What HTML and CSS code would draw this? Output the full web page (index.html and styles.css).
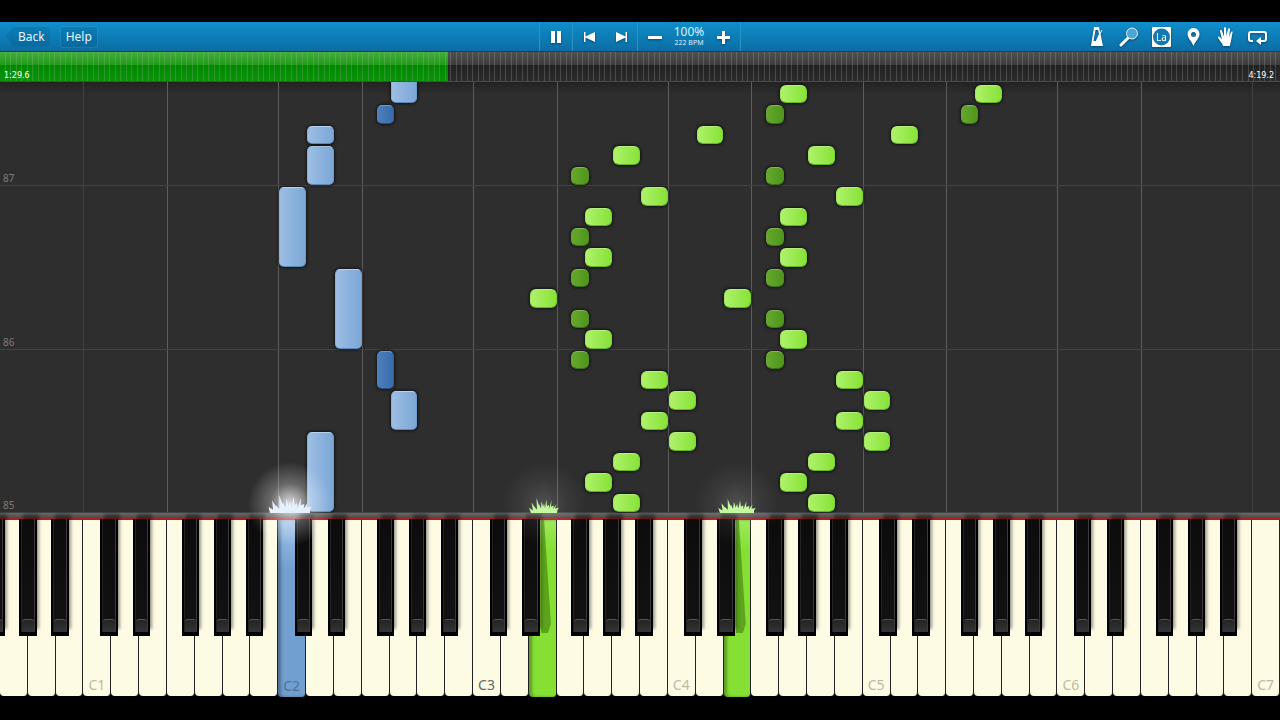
FILE: index.html
```
<!DOCTYPE html>
<html lang="en">
<head>
    <meta charset="UTF-8">
    <meta name="viewport" content="width=device-width, initial-scale=1.0">
    <title>Piano Roll</title>
    <link rel="stylesheet" href="styles.css">
</head>
<body>
    <header class="toolbar">
        <nav class="toolbar-left">
            <button class="nav-btn back-btn">Back</button>
            <button class="nav-btn">Help</button>
        </nav>
        <div class="transport">
            <div class="group group-pause">
                <button class="icon-btn" aria-label="Pause">
                    <svg width="20" height="20" viewBox="0 0 20 20"><path d="M5 4h4v12H5zM11 4h4v12h-4z"/></svg>
                </button>
            </div>
            <div class="group group-skip">
                <button class="icon-btn" aria-label="Previous">
                    <svg width="20" height="20" viewBox="0 0 20 20"><path d="M4 5h1.500v4.500L15 5v10l-9.500-4.500V15H4z"/></svg>
                </button>
                <button class="icon-btn" aria-label="Next">
                    <svg width="20" height="20" viewBox="0 0 20 20"><path d="M15 5h-1.500v4.500L4 5v10l9.500-4.500V15H15z"/></svg>
                </button>
            </div>
            <div class="group group-speed">
                <button class="icon-btn" aria-label="Slower">
                    <svg width="20" height="20" viewBox="0 0 20 20"><path d="M3 9h14v3H3z"/></svg>
                </button>
                <div class="speed">
                    <span class="speed-value">100%</span>
                    <span class="speed-bpm">222 BPM</span>
                </div>
                <button class="icon-btn" aria-label="Faster">
                    <svg width="20" height="20" viewBox="0 0 20 20"><path d="M4 9h5V4h3v5h5v3h-5v5H9v-5H4z"/></svg>
                </button>
            </div>
        </div>
        <div class="toolbar-right">
            <button class="icon-btn" aria-label="Metronome">
                <svg width="22" height="22" viewBox="0 0 22 22">
                    <path fill-rule="evenodd" d="M8 1h5l4 19H5zM9.500 4L7.500 15H10l3-7-1-4z"/>
                    <path class="line arm" d="M10 16l6-12"/>
                </svg>
            </button>
            <button class="icon-btn" aria-label="Zoom">
                <svg width="22" height="22" viewBox="0 0 22 22">
                    <path class="line handle" d="M3 19l7-7"/>
                    <circle class="lens" cx="14" cy="7.500" r="5.500"/>
                </svg>
            </button>
            <button class="icon-btn" aria-label="Note names">
                <svg width="22" height="22" viewBox="0 0 22 22">
                    <rect x="2" y="1" width="19" height="20" rx="1"/>
                    <circle class="badge" cx="11.500" cy="11" r="8.500"/>
                    <text class="badge-text" x="11.500" y="15" text-anchor="middle">La</text>
                </svg>
            </button>
            <button class="icon-btn" aria-label="Bookmark">
                <svg width="22" height="22" viewBox="0 0 22 22">
                    <path fill-rule="evenodd" d="M11.500 2a6 6 0 0 1 6 6c0 4-4 7-6 12-2-5-6-8-6-12a6 6 0 0 1 6-6zm0 4a2.500 2.500 0 1 0 0 5 2.500 2.500 0 0 0 0-5z"/>
                </svg>
            </button>
            <button class="icon-btn" aria-label="Hands">
                <svg width="22" height="22" viewBox="0 0 22 22">
                    <path d="M9 20c0-3-4-5-5-9 1-1 2 0 4 2.500L6 5c0-1 1.500-1.500 2 0l2 5.500V2c0-1 2-1 2 0l.6 8L14 3c.3-1 2-1 2 .5L15 11l2-5c.5-1 2-.5 1.500.5L17 15c-.3 2-1 3-1 5z"/>
                </svg>
            </button>
            <button class="icon-btn" aria-label="Loop">
                <svg width="22" height="22" viewBox="0 0 22 22">
                    <path class="line" d="M7 15H5a2 2 0 0 1-2-2V8a2 2 0 0 1 2-2h13a2 2 0 0 1 2 2v5a2 2 0 0 1-2 2h-4"/>
                    <path d="M10 15l5-4v8z"/>
                </svg>
            </button>
        </div>
    </header>

    <div class="timeline">
        <div class="timeline-played"></div>
        <div class="timeline-bars"></div>
        <span class="time time-now">1:29.6</span>
        <span class="time time-total">4:19.2</span>
    </div>

    <main class="roll" id="roll"></main>

    <div class="rail"></div>
    <div class="keyboard" id="keyboard"></div>

    <script src="piano.js"></script>
</body>
</html>
```
FILE: styles.css
```
* {
    box-sizing: border-box;
}
body {
    margin: 0;
    padding: 22px 0 23px;
    height: 100vh;
    display: flex;
    flex-direction: column;
    background: #000;
    font-family: 'Noto Sans', 'Open Sans', sans-serif;
    overflow: hidden;
}
button {
    border: none;
    background: none;
    padding: 0;
    color: #fff;
    font-family: inherit;
    cursor: pointer;
}

/* toolbar */
.toolbar {
    flex: none;
    height: 30px;
    display: grid;
    grid-template-columns: 1fr auto 1fr;
    align-items: center;
    background: linear-gradient(#108ecb, #0b6da3);
    border-bottom: 1px solid #07405f;
}
.toolbar-left {
    display: flex;
    gap: 11px;
    padding-left: 6px;
}
.nav-btn {
    height: 20px;
    padding: 0 5px;
    font-size: 12px;
    line-height: 20px;
    color: #e4f4fc;
    background: rgba(0, 60, 100, 0.16);
    box-shadow: 0 0 0 1px rgba(120, 200, 240, 0.12);
    border-radius: 2px;
}
.back-btn {
    padding-left: 12px;
    clip-path: polygon(8px 0, 100% 0, 100% 100%, 8px 100%, 0 50%);
}
.transport {
    display: flex;
    height: 29px;
}
.group {
    display: flex;
    align-items: center;
    padding: 0 6px;
    border-left: 1px solid #2a94c8;
}
.group-skip {
    gap: 12px;
    padding: 0 5px 0 7px;
}
.group-speed {
    gap: 4px;
    padding: 0 7px;
    border-right: 1px solid #2a94c8;
}
.icon-btn {
    display: flex;
    filter: drop-shadow(0 1px 1px rgba(0, 40, 70, 0.6));
}
.icon-btn svg {
    fill: #fff;
}
.speed {
    display: flex;
    flex-direction: column;
    align-items: center;
    width: 40px;
    color: #d8f1fc;
    white-space: nowrap;
}
.speed-value {
    font-size: 12px;
    line-height: 13px;
}
.speed-bpm {
    font-size: 7px;
    line-height: 10px;
}
.toolbar-right {
    display: flex;
    justify-content: flex-end;
    gap: 10px;
    padding-right: 12px;
}
.toolbar-right .line {
    fill: none;
    stroke: #fff;
    stroke-width: 2;
}
.toolbar-right .arm {
    stroke-width: 1;
}
.toolbar-right .handle {
    stroke-width: 3;
    stroke-linecap: round;
}
.toolbar-right .lens {
    fill: #4ba6d2;
    stroke: #e8f6fd;
    stroke-width: 1;
}
.toolbar-right .badge {
    fill: #1579af;
}
.badge-text {
    font-size: 10px;
}

/* song position */
.timeline {
    flex: none;
    position: relative;
    height: 30px;
    background: linear-gradient(#505050, #3c3c3c 45%, #222 46%, #2b2b2b);
    border-bottom: 1px solid #4a4a4a;
}
.timeline-played {
    width: 35%;
    height: 100%;
    background: linear-gradient(#43ad3c, #209b1c 44%, #008a00 46%, #0c920b);
}
.timeline-bars {
    position: absolute;
    inset: 0;
    background: repeating-linear-gradient(90deg, transparent 0 5px, rgba(170, 180, 170, 0.25) 5px 6px, transparent 6px 10px, rgba(170, 180, 170, 0.25) 10px 11px);
}
.time {
    position: absolute;
    bottom: 0;
    font-family: 'DejaVu Sans', sans-serif;
    font-size: 8px;
    line-height: 11px;
    color: #fff;
}
.time-now {
    left: 4px;
}
.time-total {
    right: 6px;
}

/* falling notes */
.roll {
    flex: 1;
    position: relative;
    overflow: hidden;
    background: linear-gradient(#222, #2e2e2e 12px);
}
.column-line {
    position: absolute;
    top: 0;
    bottom: 0;
    width: 1px;
    background: #5c5c5c;
}
.column-line.edge {
    background: #414141;
}
.measure {
    position: absolute;
    left: 0;
    right: 0;
    padding-left: 3px;
    border-bottom: 1px solid #434343;
    font-size: 10px;
    line-height: 13px;
    color: #7c7c7c;
}
.note {
    position: absolute;
    border: 1px solid;
    border-radius: 6px;
    box-shadow: 0 0 3px 1px rgba(0, 0, 0, 0.6);
}
.note.right {
    background: linear-gradient(90deg, #b0f26c, #86e236) border-box;
    border-color: #b4ef80 #7ed534 #66b52a #a3e663;
}
.note.right.sharp {
    background: linear-gradient(90deg, #66a82e, #4e951b) border-box;
    border-color: #86b858 #55921f #3d7515 #6ca53b;
}
.note.left {
    background: linear-gradient(90deg, #9dbfe4, #7ba6d6) border-box;
    border-color: #b5d2ef #6d9ccf #5c89ba #8bb0d9;
    border-radius: 5px;
}
.note.left.sharp {
    background: linear-gradient(90deg, #4e80be, #386ba9) border-box;
    border-color: #7099ca #34639c #294f7e #5580b4;
}

/* keyboard */
.rail {
    flex: none;
    height: 7px;
    background: linear-gradient(#686868, #4c4848 5px, #a82020 5px);
}
.keyboard {
    flex: none;
    position: relative;
    display: flex;
    height: 177px;
    background: #000;
}
.white-key {
    flex: 1;
    min-width: 0;
    display: flex;
    align-items: flex-end;
    justify-content: center;
    height: 176px;
    padding-bottom: 2px;
    background: #fefbe5;
    border-right: 1px solid #222;
    border-radius: 0 0 4px 4px;
    font-size: 14px;
    line-height: 18px;
    color: #bcb9a6;
}
.white-key.middle {
    color: #69675e;
}
.white-key.down {
    height: 177px;
    box-shadow: inset 3px 0 3px rgba(0, 0, 0, 0.3);
}
.white-key.down.left {
    background: linear-gradient(#9ec2e8, #719fd0 50px);
    color: #4f7298;
}
.white-key.down.right {
    background: linear-gradient(#98e850, #86e034 30px);
}
.black-key {
    position: absolute;
    top: -1px;
    height: 117px;
    background: linear-gradient(#0c0c0c, #121212);
    border: solid #000;
    border-width: 0 2px 4px;
    box-shadow: 3px -6px 3px -1px rgba(0, 0, 0, 0.4), inset -1px 0 #3a3a3a, inset 1px 0 #222;
}
.black-key::after {
    content: '';
    position: absolute;
    left: 1px;
    right: 1px;
    bottom: 0;
    height: 12px;
    background: linear-gradient(#242424, #343434);
    border-top: 1px solid #555;
    border-radius: 3px 3px 0 0;
}
.key-shadow {
    position: absolute;
    top: 0;
    height: 113px;
    background: rgba(40, 90, 0, 0.45);
    clip-path: polygon(0 0, 30% 0, 100% 92%, 70% 100%, 0 100%);
}

/* sparks over the keys being played */
.glow {
    position: absolute;
    width: 90px;
    height: 90px;
    margin-left: -45px;
    top: -61px;
    background: radial-gradient(rgba(255, 255, 255, 0.85), rgba(255, 255, 255, 0.28) 32%, transparent 66%);
    pointer-events: none;
}
.glow.right {
    background: radial-gradient(rgba(255, 255, 255, 0.16), rgba(255, 255, 255, 0.06) 35%, transparent 66%);
}
.sparks {
    position: absolute;
    top: -25px;
    pointer-events: none;
}
```
FILE: piano.js
```
const WHITE_KEYS = 46;
const FIRST_C = 3;      // white keys before C1
const VISIBLE = 21.1;   // eighths shown in the roll
const BLACK_WIDTH = 0.63;

// centre of each black key, in white keys from its C
const SHARPS = { cs: 0.91, ds: 2.09, fs: 3.85, gs: 5, as: 6.15 };

// [white key, start, length] or ['fs', octave, start, length]
const leftHand = [
    [11, 0, 4], [14, 4, 2], ['fs', 2, 6, 2], [12, 8, 4], [10, 12, 4],
    [11, 16, 2], [11, 18, 1], ['fs', 2, 19, 1], [14, 20, 2]
];
const rightHand = [
    [22, 0, 1], [21, 1, 1], [22, 2, 1], [24, 3, 1], [23, 4, 1], [24, 5, 1], [23, 6, 1],
    ['fs', 3, 7, 1], [21, 8, 1], ['fs', 3, 9, 1], [19, 10, 1], ['fs', 3, 11, 1], [21, 12, 1],
    ['fs', 3, 13, 1], [21, 14, 1], [23, 15, 1], ['fs', 3, 16, 1], [22, 17, 1], [25, 18, 1],
    ['fs', 4, 19, 1], [28, 20, 1]
];

const roll = document.getElementById('roll');
const keyboard = document.getElementById('keyboard');

const percent = (keys) => (keys / WHITE_KEYS) * 100 + '%';

function add(parent, className, style) {
    const el = document.createElement('div');
    el.className = className;
    Object.assign(el.style, style);
    parent.appendChild(el);
    return el;
}

function addNote(note, hand, octaveShift) {
    const sharp = typeof note[0] === 'string';
    const [start, length] = note.slice(-2);
    let left = note[0] + octaveShift * 7;
    let width = 1;
    if (sharp) {
        width = BLACK_WIDTH;
        left = FIRST_C + (note[1] - 1 + octaveShift) * 7 + SHARPS[note[0]] - width / 2;
    }
    add(roll, 'note ' + hand + (sharp ? ' sharp' : ''), {
        left: `calc(${percent(left)} + ${sharp ? 0 : 1}px)`,
        width: `calc(${percent(width)} - ${sharp ? 0 : 1}px)`,
        bottom: `calc(${(start / VISIBLE) * 100}% + 1px)`,
        height: `calc(${(length / VISIBLE) * 100}% - 2px)`
    });
}

// grid: a line at every C and F, one at every measure
for (let k = FIRST_C; k < WHITE_KEYS; k += 7) {
    add(roll, 'column-line' + (k === FIRST_C || k === 45 ? ' edge' : ''), { left: percent(k) });
    if (k + 3 < WHITE_KEYS) {
        add(roll, 'column-line', { left: percent(k + 3) });
    }
}
for (let m = 0; m < 3; m++) {
    add(roll, 'measure', { bottom: (m * 8 / VISIBLE) * 100 + '%' }).textContent = 85 + m;
}

leftHand.forEach((n) => addNote(n, 'left', 0));
rightHand.forEach((n) => {
    addNote(n, 'right', 0);
    addNote(n, 'right', 1);
});

// white keys
const pressed = { 10: 'left', 19: 'right', 26: 'right' };
for (let k = 0; k < WHITE_KEYS; k++) {
    const key = add(keyboard, 'white-key' + (pressed[k] ? ' down ' + pressed[k] : ''), {});
    if ((k - FIRST_C) % 7 === 0) {
        const octave = (k - FIRST_C) / 7 + 1;
        key.textContent = 'C' + octave;
        if (octave === 3) key.classList.add('middle');
    }
}

// black keys
for (let octave = 0; octave < 7; octave++) {
    for (const name in SHARPS) {
        const centre = FIRST_C + (octave - 1) * 7 + SHARPS[name];
        if (centre < -0.5 || centre > WHITE_KEYS) continue;
        add(keyboard, 'black-key', { left: percent(centre - BLACK_WIDTH / 2), width: percent(BLACK_WIDTH) });
    }
}
[19.45, 26.45].forEach((k) => add(keyboard, 'key-shadow', { left: percent(k), width: percent(0.35) }));

// spikes of different height along a flat base
function addSparks(centre, width, height, color, hand) {
    add(keyboard, 'glow ' + hand, { left: percent(centre) });
    const heights = [0.35, 0.7, 0.45, 1, 0.6, 0.8, 0.65, 0.9, 0.55, 0.85, 0.5, 0.6, 0.35];
    const step = width / heights.length;
    let d = 'M0 18';
    heights.forEach((h, i) => {
        const lean = (i - 6) * 0.5;
        d += `L${i * step + step / 2 + lean} ${18 - h * height}L${(i + 1) * step} ${18 - h * height * 0.5}`;
    });
    const holder = add(keyboard, 'sparks', { left: `calc(${percent(centre)} - ${width / 2}px)` });
    holder.innerHTML = `<svg width="${width}" height="18" overflow="visible"><path fill="${color}" d="${d}L${width} 18z"/></svg>`;
}
addSparks(10.42, 40, 18, '#e6f1ff', 'left');
addSparks(19.55, 26, 15, '#c5f9a0', 'right');
addSparks(26.5, 34, 14, '#c5f9a0', 'right');
```
